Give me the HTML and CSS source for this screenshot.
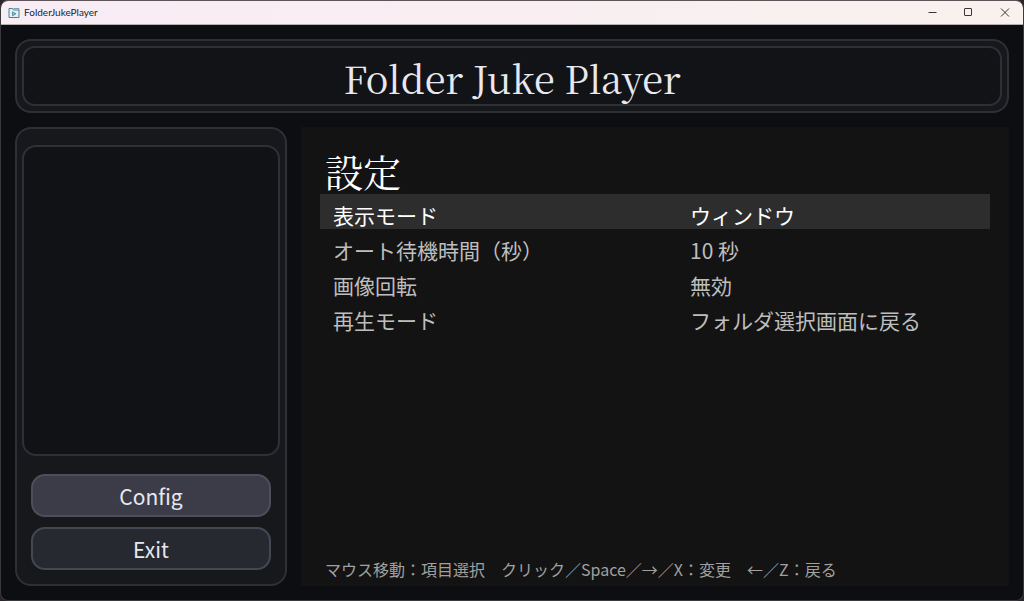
FILE: index.html
```html
<!DOCTYPE html>
<html lang="ja">
<head>
    <meta charset="UTF-8">
    <meta name="viewport" content="width=device-width, initial-scale=1.0">
    <title>FolderJukePlayer</title>
    <link rel="stylesheet" href="styles.css">
</head>
<body>
    <div class="window">
        <div class="titlebar">
            <svg class="app-icon" viewBox="0 0 12 12" width="12" height="12" fill="none">
                <path d="M1 10.5V1.5H4.5L5.5 3H11V10.5Z" fill="#e4f0f3" stroke="#4a8294"/>
                <path d="M5.5 1.5H11V3" stroke="#7aa4b1"/>
                <path d="M4.5 4.8V8.8L8 6.8Z" fill="#8fc0c8" stroke="#4a8294" stroke-width="0.8"/>
            </svg>
            <span class="app-name">FolderJukePlayer</span>
            <button class="win-btn" aria-label="最小化">
                <svg viewBox="0 0 10 10" width="10" height="10"><path d="M0.5 4.5H8.5"/></svg>
            </button>
            <button class="win-btn" aria-label="最大化">
                <svg viewBox="0 0 10 10" width="10" height="10"><rect x="0.5" y="0.5" width="7" height="7" rx="0.5"/></svg>
            </button>
            <button class="win-btn" aria-label="閉じる">
                <svg viewBox="0 0 10 10" width="10" height="10"><path d="M1 0.5L9 8.5M9 0.5L1 8.5"/></svg>
            </button>
        </div>

        <div class="client">
            <header class="banner">
                <h1>Folder Juke Player</h1>
            </header>

            <aside class="sidebar">
                <div class="folder-list"></div>
                <nav class="menu">
                    <button class="menu-btn active">Config</button>
                    <button class="menu-btn">Exit</button>
                </nav>
            </aside>

            <main class="settings">
                <h2>設定</h2>
                <table class="settings-table">
                    <tr class="selected"><th scope="row">表示モード</th><td>ウィンドウ</td></tr>
                    <tr><th scope="row">オート待機時間（秒）</th><td>10 秒</td></tr>
                    <tr><th scope="row">画像回転</th><td>無効</td></tr>
                    <tr><th scope="row">再生モード</th><td>フォルダ選択画面に戻る</td></tr>
                </table>
                <p class="help">マウス移動：項目選択　クリック／Space／→／X：変更　←／Z：戻る</p>
            </main>
        </div>
    </div>
</body>
</html>
```
FILE: styles.css
```css
* {
    box-sizing: border-box;
}
body {
    margin: 0;
    background: #2a2528;
    font-family: "Noto Sans CJK JP", sans-serif;
}
button {
    font-family: inherit;
    margin: 0;
    padding: 0;
}
.window {
    display: flex;
    flex-direction: column;
    min-height: 100vh;
    border: 1px solid #3a3a3c;
    border-top-color: #5e5358;
    border-radius: 8px;
    background: #0d0e12;
    overflow: hidden;
}

/* title bar */
.titlebar {
    display: flex;
    align-items: center;
    height: 24px;
    padding-left: 7px;
    background: linear-gradient(90deg, #f8ecf5, #f9f1ee);
    border-bottom: 1px solid #b5afb0;
}
.app-name {
    flex: 1;
    margin-left: 4px;
    font-family: Lato, sans-serif;
    font-size: 10px;
    line-height: 12px;
    padding-bottom: 1px;
    color: #1f1c1e;
}
.win-btn {
    display: flex;
    align-items: center;
    justify-content: center;
    width: 36px;
    height: 100%;
    border: none;
    background: none;
}
.win-btn svg {
    fill: none;
    stroke: #3a3537;
}

/* main area */
.client {
    flex: 1;
    display: grid;
    grid-template-columns: 272px 1fr;
    grid-template-rows: auto 1fr;
    gap: 14px;
    padding: 14px;
}
.banner {
    grid-column: 1 / -1;
    padding: 5px;
    border: 2px solid #2e3035;
    border-radius: 16px;
    background: #16181c;
}
.banner h1 {
    margin: 0;
    padding-top: 4px;
    border: 2px solid #2e3035;
    border-radius: 13px;
    background: #121317;
    color: #e8e8f0;
    font-family: "Noto Serif CJK JP", "Liberation Serif", serif;
    font-size: 38px;
    font-weight: normal;
    line-height: 52px;
    text-align: center;
}
.sidebar {
    display: flex;
    flex-direction: column;
    padding: 16px 5px 14px;
    border: 2px solid #2e3035;
    border-radius: 16px;
    background: #17181c;
}
.folder-list {
    flex: 1;
    border: 2px solid #2e3035;
    border-radius: 14px;
    background: #111216;
}
.menu {
    display: flex;
    flex-direction: column;
    gap: 10px;
    padding: 18px 9px 0;
}
.menu-btn {
    height: 43px;
    border: 2px solid #454852;
    border-radius: 14px;
    background: #272930;
    color: #e8e8f0;
    font-size: 21px;
    line-height: 32px;
}
.menu-btn.active {
    background: #3b3c48;
    border-color: #4c4e5a;
}

.settings {
    display: flex;
    flex-direction: column;
    padding: 20px 19px 0;
    background: #131313;
}
.settings h2 {
    margin: 0;
    padding-left: 5px;
    color: #fff;
    font-family: "Noto Serif CJK JP", "Noto Sans CJK JP", serif;
    font-size: 38px;
    font-weight: normal;
    line-height: 47px;
}
.settings-table {
    width: 100%;
    table-layout: fixed;
    border-collapse: collapse;
    color: #bebebe;
    font-size: 21px;
    line-height: 28px;
}
.settings-table th,
.settings-table td {
    height: 35px;
    padding: 6px 0 0 13px;
    font-weight: normal;
    text-align: left;
}
.settings-table td {
    padding-left: 15px;
}
.settings-table th {
    width: 53%;
}
.settings-table .selected {
    background: #2d2d2d;
    color: #fff;
}
.help {
    margin: auto 0 0;
    padding: 0 0 5px 5px;
    color: #a0a0a0;
    font-size: 16px;
    line-height: 24px;
}
```
